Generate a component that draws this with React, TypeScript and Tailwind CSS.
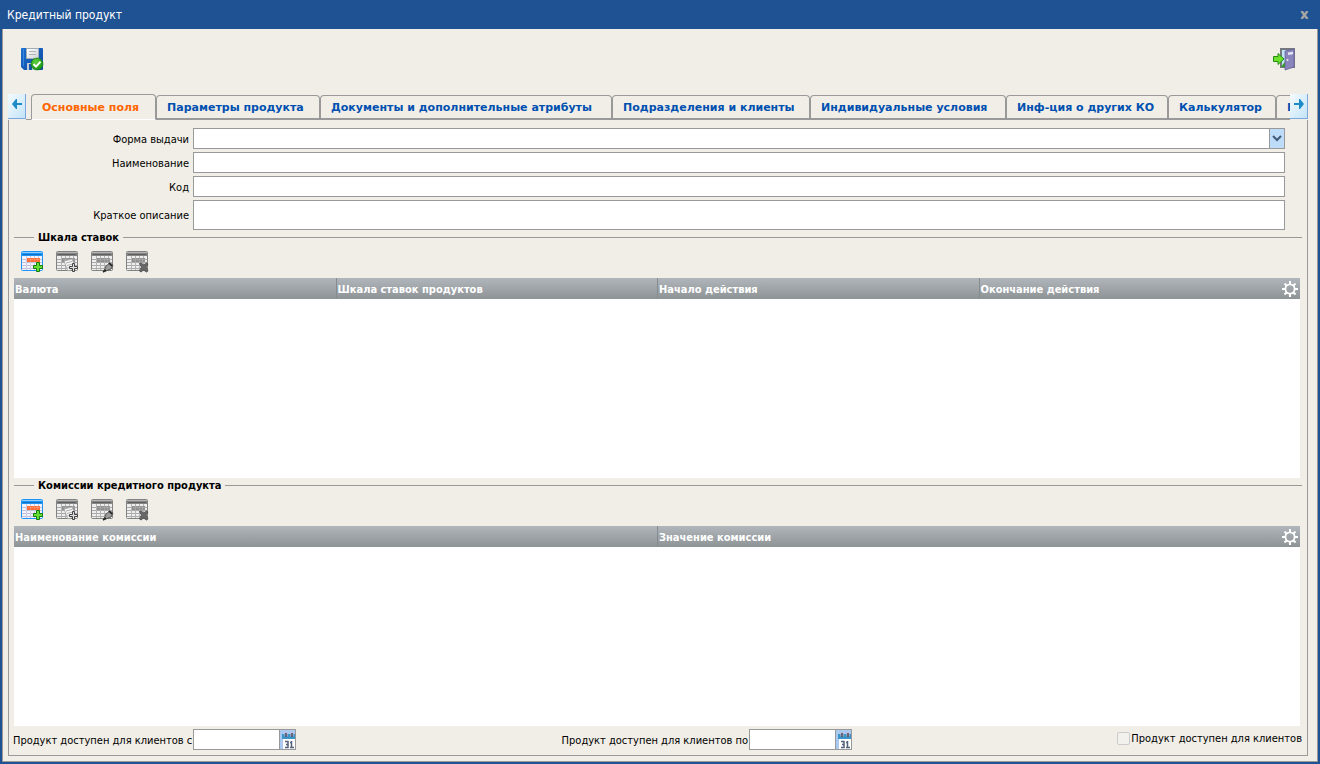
import React, { useState } from 'react';

const SaveIcon = () => (
  <svg width="24" height="24" viewBox="0 0 24 24" aria-hidden="true">
    <defs>
      <linearGradient id="disk" x1="0" y1="0" x2="1" y2="1">
        <stop offset="0" stopColor="#1b6fd0" />
        <stop offset="1" stopColor="#0f4a9e" />
      </linearGradient>
      <linearGradient id="diskLabel" x1="0" y1="0" x2="1" y2="1">
        <stop offset="0" stopColor="#ffffff" />
        <stop offset="1" stopColor="#cfd4d9" />
      </linearGradient>
      <radialGradient id="ok" cx="0.4" cy="0.3" r="0.8">
        <stop offset="0" stopColor="#5fd03a" />
        <stop offset="1" stopColor="#0c8a12" />
      </radialGradient>
    </defs>
    <path d="M2 1h20a1 1 0 0 1 1 1v20a1 1 0 0 1-1 1H4l-3-3V2a1 1 0 0 1 1-1z" fill="url(#disk)" />
    <path d="M3.5 2v17" stroke="#3b87dd" />
    <path d="M6.5 1.500h12v10h-12z" fill="url(#diskLabel)" stroke="#a4acb5" />
    <path d="M9 4.500h7M9 7.500h7" stroke="#b0b4b8" />
    <path d="M7 16h10v7H7z" fill="#c3ccd6" />
    <path d="M9 17h3v6H9z" fill="#1556a8" />
    <circle cx="17" cy="17" r="6" fill="url(#ok)" stroke="#0b7a10" strokeWidth="0.6" />
    <path d="M13.5 17l2.5 2.6 4.5-5" fill="none" stroke="#fff" strokeWidth="2" />
  </svg>
);

const ExitIcon = () => (
  <svg width="24" height="24" viewBox="0 0 24 24" aria-hidden="true">
    <path d="M8 1h15v20H8z" fill="#75797f" />
    <path d="M10 3h5v17h-5z" fill="#bfe6f7" />
    <path d="M9 20l6-8v8z" fill="#2ea51e" />
    <path d="M13 4l9-2v18l-9 3z" fill="#8a86bd" stroke="#66629a" strokeWidth="0.8" />
    <path d="M16 5.5l5-.8v2.5l-5 .8z" fill="#e6e6f7" />
    <circle cx="15.5" cy="13" r="1" fill="#f1f0e0" />
    <path d="M1.5 9.5H6V6.5l6 5.5-6 5.5v-3H1.5z" fill="#6de02a" stroke="#218c12" />
  </svg>
);

type GridIconKind = 'add' | 'copy' | 'edit' | 'delete';

const GridIcon: React.FC<{ kind: GridIconKind }> = ({ kind }) => {
  const active = kind === 'add';
  return (
    <svg width="24" height="24" viewBox="0 0 24 24" aria-hidden="true">
      <rect x="1.5" y="2.5" width="21" height="19" rx="1" fill={active ? '#f2f2fb' : '#eeeeee'} stroke={active ? '#1f94f5' : '#828282'} />
      <path d="M2 3h20v4H2z" fill={active ? '#1f94f5' : '#858585'} />
      <path d="M2 3.5h20" stroke={active ? '#8cccff' : '#b4b4b4'} />
      <path d="M3 5.5h18" stroke={active ? '#0d70c8' : '#606060'} />
      <path d="M2 10.5h20M2 13.5h20M2 16.5h20M2 19.5h20" stroke={active ? '#c0c0dc' : '#a9a9a9'} />
      <path d="M6.5 7v14M10.5 7v14M14.5 7v14M18.5 7v14" stroke={active ? '#cdcde6' : '#b3b3b3'} />
      <path d="M7 9h13v4H7z" fill={active ? '#ff6a35' : '#909090'} />
      <path d="M8 10.5h12M10.5 9v4M14.5 9v4M17.5 9v4" stroke={active ? '#ff9a70' : '#b0b0b0'} strokeWidth="0.6" />
      {kind === 'add' && (
        <path d="M16.5 13.5h3v3h3v3h-3v3h-3v-3h-3v-3h3z" fill="#66dd35" stroke="#137a12" />
      )}
      {kind === 'copy' && (
        <>
          <path d="M9 12l8-2 4 9-8 3z" fill="#f5f5f5" stroke="#999" strokeWidth="0.7" />
          <path d="M11 14l6-1.5M12 16.5l6-1.5M12.5 19l5-1.5" stroke="#9c9c9c" strokeWidth="0.8" />
          <path d="M17.5 14.5h2v3h3v2h-3v3h-2v-3h-3v-2h3z" fill="#ddd" stroke="#444" />
        </>
      )}
      {kind === 'edit' && (
        <>
          <path d="M14 22l2-5 4-3 3 2-2 4-5 2z" fill="#9b9b9b" stroke="#555" />
          <path d="M13 23l3-2M19 14l3 3" stroke="#222" strokeWidth="1.6" />
        </>
      )}
      {kind === 'delete' && (
        <path d="M14.5 14.5l2-.5 2 2 3-2 1.5 1-2 3 2 4-1.5 1-3-2-2.5 2-1.5-1 2-4z" fill="#686868" stroke="#484848" strokeWidth="0.8" />
      )}
    </svg>
  );
};

const GearIcon = () => (
  <svg width="16" height="16" viewBox="0 0 16 16" fill="none" stroke="#fff" aria-hidden="true">
    <circle cx="8" cy="8" r="4.6" strokeWidth="1.8" />
    <path d="M8 0v3M8 13v3M0 8h3M13 8h3M2.5 2.5l2 2M11.5 11.5l2 2M13.5 2.5l-2 2M4.5 11.5l-2 2" strokeWidth="2" />
  </svg>
);

const ArrowIcon: React.FC<{ left?: boolean }> = ({ left }) => (
  <svg width="10" height="10" viewBox="0 0 10 10" className={left ? 'rotate-180' : ''} aria-hidden="true">
    <path d="M0 4h5V0h1l4 5-4 5H5V6H0z" fill="#1e8bc6" />
  </svg>
);

const CalendarIcon = () => (
  <svg width="15" height="19" viewBox="0 0 15 19" aria-hidden="true">
    <path d="M2 4h13v5H2z" fill="#3a94c8" />
    <path d="M3 9h12v10H3z" fill="#fff" />
    <path d="M6 2.5v4M12 2.5v4" stroke="#c9b8cf" strokeWidth="3" />
    <path d="M6 3v4M12 3v4" stroke="#4b4a5c" strokeWidth="1.5" />
    <path d="M5 11.5h3v6H5M6 14.5h2M11.5 11v7M10 12.5h1.5M10 17.5h4" stroke="#56617a" strokeWidth="1.5" fill="none" />
  </svg>
);

const tabs = [
  { title: 'Основные поля', width: 'w-[125px]' },
  { title: 'Параметры продукта', width: 'w-[164px]' },
  { title: 'Документы и дополнительные атрибуты', width: 'w-[292px]' },
  { title: 'Подразделения и клиенты', width: 'w-[198px]' },
  { title: 'Индивидуальные условия', width: 'w-[196px]' },
  { title: 'Инф-ция о других КО', width: 'w-[162px]' },
  { title: 'Калькулятор', width: 'w-[108px]' },
  { title: 'П', width: 'w-[30px]' },
];

const toolbar: { kind: GridIconKind; label: string }[] = [
  { kind: 'add', label: 'Добавить' },
  { kind: 'copy', label: 'Копировать' },
  { kind: 'edit', label: 'Изменить' },
  { kind: 'delete', label: 'Удалить' },
];

const inputClass = 'w-full border border-[#999] bg-white px-1 outline-none';
const scrollClass =
  'mb-px flex w-[18px] shrink-0 items-center justify-center border-r border-b border-[#7aa7dd] bg-linear-to-br from-[#f4faff] to-[#c4e4f8] pb-1';

const Field: React.FC<{ id: string; label: string; children: React.ReactNode }> = ({ id, label, children }) => (
  <div className="flex items-center gap-1">
    <label htmlFor={id} className="w-[180px] shrink-0 pt-[2px] text-right">{label}</label>
    <div className="relative flex flex-1">{children}</div>
  </div>
);

const GridSection: React.FC<{ title: string; columns: string[] }> = ({ title, columns }) => (
  <section className="flex flex-1 flex-col pl-[5px]">
    <div className="mr-[5px] flex h-[14px] items-center gap-1">
      <span className="h-px w-5 bg-[#999]" />
      <h2 className="pt-px font-bold">{title}</h2>
      <span className="h-px flex-1 bg-[#999]" />
    </div>
    <div className="flex h-[34px] items-center gap-[11px] pl-[6px]">
      {toolbar.map(({ kind, label }) => (
        <button key={kind} type="button" aria-label={label} disabled={kind !== 'add'}>
          <GridIcon kind={kind} />
        </button>
      ))}
    </div>
    <div className="mr-[7px] flex-1 bg-white">
      <table className="w-full table-fixed border-separate border-spacing-0">
        <thead>
          <tr className="h-[21px] bg-linear-to-b from-[#b0b6bb] to-[#8e9396] text-white">
            {columns.map((column, i) => (
              <th key={column} className="border-l border-[#868b8e] p-0 pl-px text-left font-bold first:border-l-0">
                <div className="flex items-center justify-between pr-[2px]">
                  <span className="pt-[2px]">{column}</span>
                  {i === columns.length - 1 && (
                    <button type="button" aria-label="Настройка столбцов"><GearIcon /></button>
                  )}
                </div>
              </th>
            ))}
          </tr>
        </thead>
      </table>
    </div>
  </section>
);

const DateField: React.FC<{ id: string; label: string }> = ({ id, label }) => (
  <div className="flex items-center gap-px">
    <label htmlFor={id} className="pt-[2px]">{label}</label>
    <div className="flex h-[21px] w-[103px] border border-[#999] bg-white">
      <input id={id} type="text" className="min-w-0 flex-1 px-1 outline-none" />
      <button type="button" aria-label="Календарь" className="w-4 border-l border-[#999] bg-[#a9c9f0]">
        <CalendarIcon />
      </button>
    </div>
  </div>
);

export default function App() {
  const [activeTab, setActiveTab] = useState(0);

  return (
    <div className="flex min-h-screen flex-col bg-[#1f5292] px-[2px] pb-[2px] font-['DejaVu_Sans_Condensed','DejaVu_Sans',sans-serif] text-[11px] leading-[14px] text-black">
      <header className="flex h-[29px] items-center justify-between pr-[9px] pl-[5px] text-white">
        <h1 className="text-[12px]">Кредитный продукт</h1>
        <button type="button" aria-label="Закрыть">
          <svg width="9" height="8" viewBox="0 0 9 8" stroke="#a5a5a5" strokeWidth="2.4" aria-hidden="true">
            <path d="M1.5 0l6 8M7.5 0l-6 8" />
          </svg>
        </button>
      </header>

      <main className="flex flex-1 flex-col border border-t-0 border-[#999] bg-[#f1eee7] pr-[9px] pb-[5px] pl-[5px]">
        <div className="flex h-[65px] items-center justify-between pr-3 pb-[5px] pl-3">
          <button type="button" aria-label="Сохранить"><SaveIcon /></button>
          <button type="button" aria-label="Выход"><ExitIcon /></button>
        </div>

        <div className="flex h-[26px] font-['DejaVu_Sans',sans-serif] font-bold">
          <button type="button" aria-label="Назад" className={scrollClass}>
            <ArrowIcon left />
          </button>
          <div role="tablist" className="flex min-w-0 flex-1 overflow-hidden">
            <span className="w-[5px] shrink-0 self-end border-b border-[#999]" />
            {tabs.map(({ title, width }, i) => (
              <button
                key={title}
                type="button"
                role="tab"
                aria-selected={i === activeTab}
                onClick={() => setActiveTab(i)}
                className={`${width} shrink-0 rounded-t-[4px] border border-[#999] px-[10px] pt-[2px] text-left whitespace-nowrap ${
                  i === activeTab ? 'border-b-white text-[#ff6600]' : 'mt-px border-b-2 text-[#0050b0]'
                }`}
              >
                {title}
              </button>
            ))}
          </div>
          <button type="button" aria-label="Вперёд" className={scrollClass}>
            <ArrowIcon />
          </button>
        </div>

        <div role="tabpanel" className="flex flex-1 flex-col border border-t-0 border-[#999]">
          <div className="flex flex-col gap-[3px] pt-2 pr-[22px]">
            <Field id="form" label="Форма выдачи">
              <select id="form" className={`${inputClass} h-[21px] appearance-none`} />
              <span className="pointer-events-none absolute inset-y-0 right-0 flex w-4 items-center justify-center border border-[#999] bg-[#bcdcfa]">
                <svg width="10" height="7" viewBox="0 0 10 7" fill="none" stroke="#44597c" strokeWidth="2" aria-hidden="true">
                  <path d="M1 1l4 4 4-4" />
                </svg>
              </span>
            </Field>
            <Field id="name" label="Наименование">
              <input id="name" type="text" className={`${inputClass} h-[21px]`} />
            </Field>
            <Field id="code" label="Код">
              <input id="code" type="text" className={`${inputClass} h-[21px]`} />
            </Field>
            <Field id="description" label="Краткое описание">
              <textarea id="description" className={`${inputClass} h-[30px] resize-none`} />
            </Field>
          </div>

          <GridSection
            title="Шкала ставок"
            columns={['Валюта', 'Шкала ставок продуктов', 'Начало действия', 'Окончание действия']}
          />
          <GridSection title="Комиссии кредитного продукта" columns={['Наименование комиссии', 'Значение комиссии']} />

          <footer className="flex h-[29px] items-center justify-between pr-[5px] pb-[2px] pl-1">
            <DateField id="date-from" label="Продукт доступен для клиентов с" />
            <DateField id="date-to" label="Продукт доступен для клиентов по" />
            <div className="flex items-center gap-px pb-[2px]">
              <input
                id="available"
                type="checkbox"
                disabled
                className="size-[13px] appearance-none rounded-[2px] border border-[#ccc] bg-[#f3f1ed]"
              />
              <label htmlFor="available">Продукт доступен для клиентов</label>
            </div>
          </footer>
        </div>
      </main>
    </div>
  );
}
